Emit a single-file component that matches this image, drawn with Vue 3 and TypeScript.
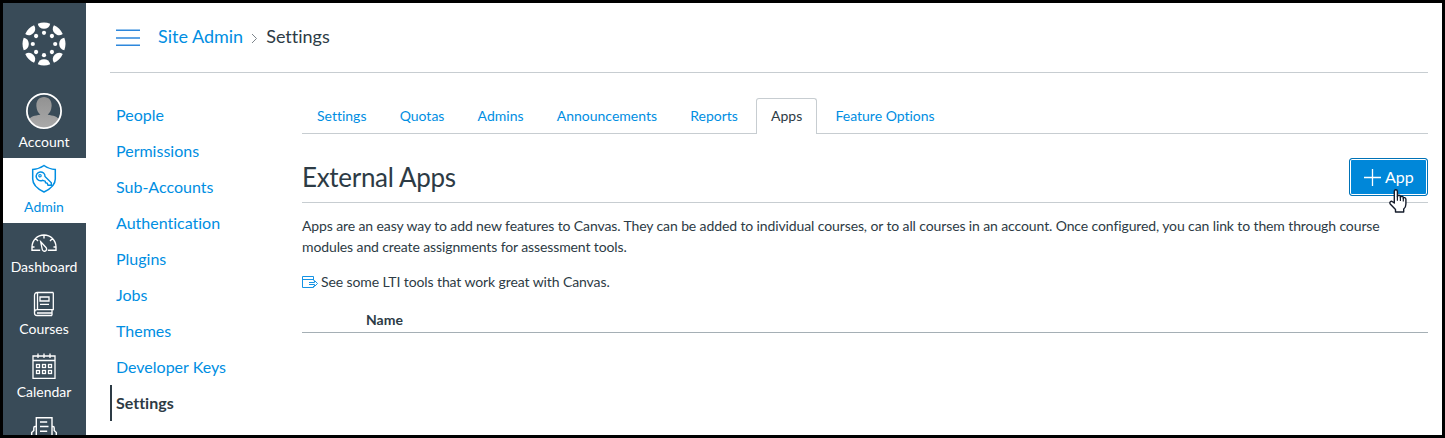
<script setup lang="ts">
const navDots = Array.from({ length: 8 }, (_, i) => i * 45)
const sections = ['People', 'Permissions', 'Sub-Accounts', 'Authentication', 'Plugins', 'Jobs', 'Themes', 'Developer Keys', 'Settings']
const tabs = ['Settings', 'Quotas', 'Admins', 'Announcements', 'Reports', 'Apps', 'Feature Options']
const calendarCells = [0, 1, 2, 3, 4, 5]
</script>

<template>
  <div class="frame">
    <nav class="global-nav">
      <a class="logo">
        <svg width="44" height="44" viewBox="-22 -22 44 44" fill="#fff">
          <g v-for="angle in navDots" :key="angle" :transform="`rotate(${angle})`">
            <path d="M-6.2-20.3Q0-22.700 6.200-20.300C5.600-17 3.300-15.200 0-15.200S-5.600-17-6.200-20.300Z" />
            <circle cx="0" cy="-11.2" r="2.100" />
          </g>
        </svg>
      </a>
      <a class="nav-item account">
        <svg width="36" height="36" viewBox="0 0 36 36">
          <defs>
            <linearGradient id="person" x2="0" y2="1"><stop stop-color="#929292" /><stop offset="1" stop-color="#aaa" /></linearGradient>
            <clipPath id="disc"><circle cx="18" cy="18" r="16.5" /></clipPath>
          </defs>
          <g clip-path="url(#disc)" fill="url(#person)">
            <path d="M18 4c5 0 8 4 7.600 9.300-.3 4-1.700 6.500-3.800 8.200v.2c5 1 10.200 1.100 11.700 6.200L30 36H6L2.500 27.900C4 22.800 9.200 22.700 14.200 21.700v-.2c-2.100-1.700-3.500-4.200-3.800-8.200C10 8 13 4 18 4Z" />
          </g>
          <circle cx="18" cy="18" r="17.100" fill="none" stroke="#fff" stroke-width="1.800" />
        </svg>
        <span>Account</span>
      </a>
      <a class="nav-item admin">
        <svg width="26" height="30" viewBox="0 0 26 30" fill="none" stroke="#008ee2" stroke-width="1.500">
          <path d="M13 1.500C9.500 4 5.500 5.200 1.700 5.400V15c0 6.500 5 10 11.300 13 6.300-3 11.300-6.500 11.300-13V5.400C20.500 5.200 16.500 4 13 1.500Z" />
          <path d="M11.500 16.300A4.400 4.400 0 1 1 14 12.500L20.300 18.700V21.200H17L16.300 19.300 14.500 18.700 14.200 17.200Z" stroke-width="1.400" />
          <circle cx="9" cy="11.700" r="1.200" stroke-width="1.200" />
        </svg>
        <span>Admin</span>
      </a>
      <a class="nav-item dashboard">
        <svg width="28" height="20" viewBox="0 0 28 20" fill="none" stroke="#fff" stroke-width="1.400">
          <path d="M10.200 17.300H2V14A12 12 0 0 1 26 14V17.300H17.800M14 2V5.500M5.600 5.600 8 8M22.400 5.600 20 8M2 14H4.500M23.500 14H26" />
          <path d="M10.700 8.800 16 14.500A2.200 2.200 0 1 1 12.200 16Z" stroke-width="1.300" />
        </svg>
        <span>Dashboard</span>
      </a>
      <a class="nav-item courses">
        <svg width="22" height="26" viewBox="0 0 22 26" fill="none" stroke="#fff" stroke-width="1.300">
          <path d="M20.300 1.500H4.500Q1.500 1.500 1.500 4.500V22Q1.500 24.500 4 24.500H19M20.300 1.500V18.700H4Q1.500 18.700 1.500 21.500M19 18.700V24.500M4.500 1.700V18.500M4 22H19" />
          <path d="M7 6H16V10H7ZM7 13.300H16" />
        </svg>
        <span>Courses</span>
      </a>
      <a class="nav-item calendar">
        <svg width="24" height="27" viewBox="0 0 24 27" fill="none" stroke="#fff" stroke-width="1.300">
          <path d="M1 3H23V25.300H1ZM1 7.500H23M6 .5V5M12 .5V5M18 .5V5" />
          <rect v-for="c in calendarCells" :key="c" :x="4.500 + (c % 3) * 6" :y="11.500 + Math.floor(c / 3) * 6" width="3" height="3" />
        </svg>
        <span>Calendar</span>
      </a>
      <a class="nav-item inbox">
        <svg width="28" height="28" viewBox="0 0 28 28" fill="none" stroke="#fff" stroke-width="1.400">
          <path d="M6.300 20V1.700H22V20M6 10.500H5Q3.800 10.500 3.800 12V14.500L1.700 16.500V26H26.300V16.500L24.200 14.500V12Q24.200 10.500 23 10.500H22M10 6H17.200M10 10.500H18.500M10 15.300H17.200" />
        </svg>
      </a>
    </nav>

    <div class="page">
      <header class="crumbs">
        <svg class="menu" width="24" height="18" viewBox="0 0 24 18" stroke="#2d87dc" stroke-width="1.600"><path d="M0 1.200H24M0 9H24M0 16.200H24" /></svg>
        <a class="root">Site Admin</a>
        <svg class="chevron" width="7" height="11" viewBox="0 0 7 11" fill="none" stroke="#7d858b"><path d="M1 1 5.500 5.500 1 10" /></svg>
        <span>Settings</span>
      </header>
      <div class="columns">
        <aside class="sections">
          <a v-for="s in sections" :key="s" :class="{ active: s === 'Settings' }">{{ s }}</a>
        </aside>
        <main class="content">
          <div class="tabs">
            <a v-for="t in tabs" :key="t" :class="{ selected: t === 'Apps' }">{{ t }}</a>
          </div>
          <div class="title-row">
            <h2>External Apps</h2>
            <button class="add">
              <svg width="17" height="17" viewBox="0 0 17 17" stroke="#fff" stroke-width="1.300"><path d="M0 8.500H17M8.500 0V17" /></svg>
              <span>App</span>
              <svg class="pointer" width="18" height="24" viewBox="0 0 18 24" fill="#fff" stroke="#151c2b" stroke-width="1.400" stroke-linejoin="round">
                <path d="M5.300 14V2.500Q5.300.8 6.800.8T8.400 2.500V7.800Q8.600 6.200 10 6.300T11.400 7.800V8.500Q11.700 7 13 7.200T14.300 8.700V9.500Q14.700 8.400 15.700 8.700T16.900 10.200V15Q16.900 18.300 14.700 20V23H6.500V20.500L1.200 15Q.4 13.500 1.400 12.700T3.500 12.700Z" />
                <path d="M8.400 7.500V11.800M11.400 8.300V12M14.300 9.300V12.500" fill="none" stroke-width="1.200" />
              </svg>
            </button>
          </div>
          <p class="intro">Apps are an easy way to add new features to Canvas. They can be added to individual courses, or to all courses in an account. Once configured, you can link to them through course modules and create assignments for assessment tools.</p>
          <p class="lti">
            <svg width="16" height="13" viewBox="0 0 16 13" fill="none" stroke="#1593e4"><path d="M11.500 4.500V.5H.5V11.500H11.500V10M.5 3.500H11.500M7 6.500H12.500V4.500L15.500 7.500 12.500 10.500V8.500H7" /></svg>
            <span>See some LTI tools that work great with Canvas.</span>
          </p>
          <div class="table-head">Name</div>
        </main>
      </div>
    </div>
  </div>
</template>

<style>
body { margin: 0; overflow: hidden; }
</style>

<style scoped>
* { box-sizing: border-box; }
.frame { display: flex; width: 1445px; height: 438px; border: 3px solid #000; background: #fff; overflow: hidden; font-family: Lato, "Liberation Sans", sans-serif; font-variant-ligatures: none; color: #2d3b45; }
svg { display: block; flex: none; }
.global-nav { width: 83px; flex: none; background: #394b58; color: #fff; height: 432px; overflow: hidden; }
.logo { display: flex; height: 85px; padding: 19px 0 0 19px; }
.nav-item { display: flex; flex-direction: column; align-items: center; position: relative; padding-right: 1px; font-size: 14px; line-height: 17px; }
.nav-item span { margin-top: auto; }
.account { height: 70px; padding-top: 5px; padding-bottom: 8px; }
.admin { height: 65px; background: #fff; color: #008ee2; padding-top: 6px; padding-bottom: 8px; }
.dashboard { height: 60px; padding-top: 10px; padding-bottom: 8px; }
.courses { height: 63px; padding-top: 8px; padding-bottom: 9px; }
.calendar { height: 63px; padding-top: 7px; padding-bottom: 9px; }
.inbox { height: 70px; padding-top: 7px; }
.page { flex: 1; padding: 0 14px 0 24px; }
.crumbs { height: 70px; border-bottom: 1px solid #c7cdd1; display: flex; align-items: center; padding: 0 0 4px 6px; font-size: 18px; line-height: 24px; }
.menu { margin-top: 4px; }
.root { color: #008ee2; margin-left: 18px; }
.chevron { margin: 5px 8px 0; }
.columns { display: flex; }
.sections { width: 192px; flex: none; padding-top: 24px; }
.sections a { display: block; height: 36px; line-height: 36px; padding-left: 6px; font-size: 16px; color: #008ee2; }
.sections .active { border-left: 2px solid #2d3b45; padding-left: 4px; font-weight: 700; color: #2d3b45; }
.content { flex: 1; min-width: 0; }
.tabs { display: flex; gap: 3.2px; margin-top: 25px; height: 36px; border-bottom: 1px solid #c7cdd1; }
.tabs a { height: 36px; padding: 0 14px; border: 1px solid transparent; border-bottom: 0; font-size: 14px; line-height: 34px; color: #008ee2; white-space: nowrap; }
.tabs .selected { border-color: #c7cdd1; border-radius: 3px 3px 0 0; background: #fff; color: #2d3b45; }
.title-row { height: 69px; border-bottom: 1px solid #c7cdd1; display: flex; justify-content: space-between; padding-top: 24px; }
h2 { margin: 0; font-size: 26px; font-weight: 400; line-height: 38px; letter-spacing: -0.3px; }
.add { position: relative; width: 79px; height: 38px; border: 1px solid #0072b6; border-radius: 3px; box-shadow: inset 0 0 0 1px #fff; background: #0087d9; color: #fff; display: flex; align-items: center; gap: 4px; padding: 0 0 0 14px; font: 16px Lato, sans-serif; }
.add span { margin-bottom: 2px; }
.pointer { position: absolute; left: 39px; top: 30px; }
.intro { margin: 12px 0 0; font-size: 14px; line-height: 21px; letter-spacing: -0.112px; }
.lti { display: flex; align-items: center; gap: 3px; margin: 14px 0 0; font-size: 14px; line-height: 21px; letter-spacing: -0.1px; }
.lti svg { margin-top: 2px; }
.table-head { margin-top: 18px; height: 23px; padding-left: 64px; border-bottom: 1px solid #a5afb5; font-size: 14px; font-weight: 700; line-height: 20px; }
</style>
